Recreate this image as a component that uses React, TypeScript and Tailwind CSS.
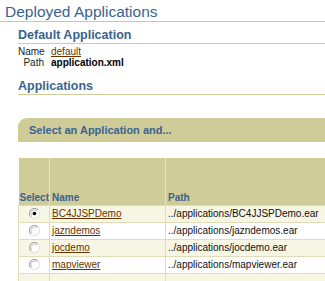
import React from 'react';

interface AppRow {
  name: string;
  path: string;
}

const apps: AppRow[] = [
  { name: 'BC4JJSPDemo', path: '../applications/BC4JJSPDemo.ear' },
  { name: 'jazndemos', path: '../applications/jazndemos.ear' },
  { name: 'jocdemo', path: '../applications/jocdemo.ear' },
  { name: 'mapviewer', path: '../applications/mapviewer.ear' },
  { name: '', path: '' },
];

const Radio: React.FC<{ checked?: boolean }> = ({ checked }) => (
  <svg width="11" height="11" viewBox="0 0 12 12" className="block mx-auto">
    <circle cx="6" cy="6" r="5.5" fill="#ffffff" />
    <path d="M2.1 9.9 A5.5 5.5 0 0 1 9.9 2.1" stroke="#8a8a8a" strokeWidth="1" fill="none" />
    <path d="M9.9 2.1 A5.5 5.5 0 0 1 2.1 9.9" stroke="#d8d8d8" strokeWidth="1" fill="none" />
    <path d="M3 8.6 A4 4 0 0 1 8.6 3" stroke="#bdbdbd" strokeWidth="1" fill="none" />
    {checked && <circle cx="6" cy="6" r="2" fill="#000000" />}
  </svg>
);

const App: React.FC = () => {
  return (
    <div className="w-[325px] h-[281px] overflow-hidden bg-white font-['Liberation_Sans',Arial,sans-serif]">
      <div className="pt-[3px]">
        <h1 className="pl-[5px] text-[15.5px] leading-[18px] text-[#3a6391] border-b border-[#cccc99]">
          Deployed Applications
        </h1>
      </div>
      <div className="pl-[18px]">
        <h2 className="mt-[6px] text-[12.5px] leading-[15px] font-bold text-[#3a6391] border-b border-[#cccc99]">
          Default Application
        </h2>
        <div className="mt-[3px] grid grid-cols-[26px_auto] gap-x-[7px] text-[10px] leading-[10.5px] text-[#222]">
          <span className="text-right">Name</span>
          <a href="#" className="text-[#663300] underline">default</a>
          <span className="text-right">Path</span>
          <span className="font-bold text-black">application.xml</span>
        </div>
        <h2 className="mt-[11px] text-[12.5px] leading-[15px] font-bold text-[#3a6391] border-b border-[#cccc99]">
          Applications
        </h2>
        <div className="mt-[23px] h-[24px] rounded-tl-[9px] bg-[#cfcc9a] pl-[11px] flex items-center text-[11px] font-bold text-[#3a6391]">
          Select an Application and...
        </div>
        <table className="mt-[16px] w-[360px] table-fixed border-collapse text-[10px]">
          <colgroup>
            <col className="w-[31px]" />
            <col className="w-[116px]" />
            <col />
          </colgroup>
          <thead>
            <tr className="h-[47px] bg-[#cfcc9a] text-[#3a6391] font-bold text-left">
              <th className="align-bottom pb-[1px] pl-[1px] leading-[12px]">Select</th>
              <th className="align-bottom pb-[1px] pl-[2px] leading-[12px] border-l border-[#e6e4c6]">Name</th>
              <th className="align-bottom pb-[1px] pl-[2px] leading-[12px] border-l border-[#e6e4c6]">Path</th>
            </tr>
          </thead>
          <tbody>
            {apps.map((app, i) => (
              <tr
                key={`row-${i}`}
                className={`h-[17px] ${i % 2 === 0 ? 'bg-[#f7f5e4]' : 'bg-white'}`}
              >
                <td className="border border-[#dedcb9] p-0">
                  {app.name && <Radio checked={i === 0} />}
                </td>
                <td className="border border-[#dedcb9] pl-[2px] leading-[12px]">
                  {app.name && (
                    <a href="#" className="text-[#663300] underline">{app.name}</a>
                  )}
                </td>
                <td className="border border-[#dedcb9] pl-[2px] leading-[12px] text-[#111]">
                  {app.path}
                </td>
              </tr>
            ))}
          </tbody>
        </table>
      </div>
    </div>
  );
};

export default App;
